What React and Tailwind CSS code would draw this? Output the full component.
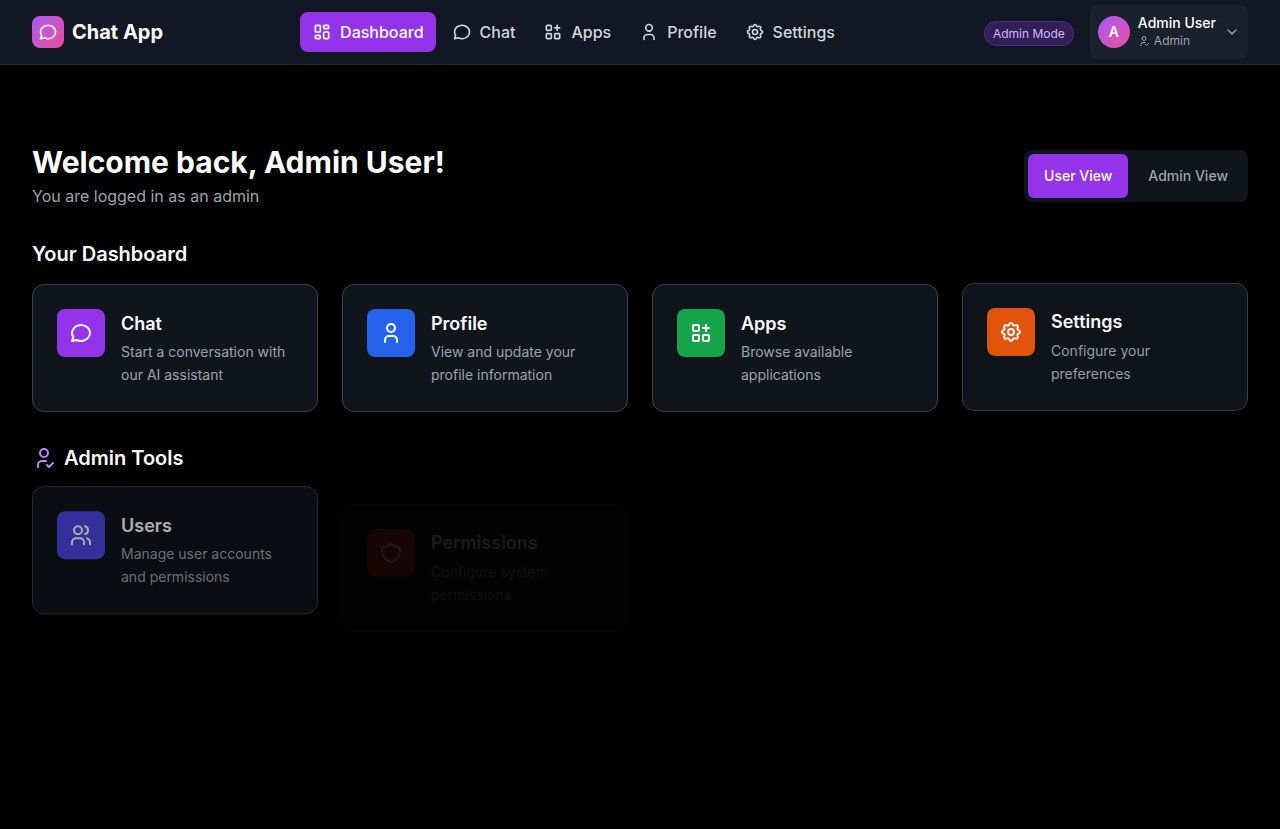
import {
  TbApps,
  TbChevronDown,
  TbLayoutDashboard,
  TbMessageCircle,
  TbSettings,
  TbShield,
  TbUser,
  TbUserCheck,
  TbUsers,
} from "react-icons/tb";

const navItems = [
  { label: "Dashboard", Icon: TbLayoutDashboard, active: true },
  { label: "Chat", Icon: TbMessageCircle },
  { label: "Apps", Icon: TbApps },
  { label: "Profile", Icon: TbUser },
  { label: "Settings", Icon: TbSettings },
];

const userCards = [
  { title: "Chat", text: "Start a conversation with our AI assistant", Icon: TbMessageCircle, color: "bg-[#9333ea]" },
  { title: "Profile", text: "View and update your profile information", Icon: TbUser, color: "bg-[#2563eb]" },
  { title: "Apps", text: "Browse available applications", Icon: TbApps, color: "bg-[#16a34a]" },
  { title: "Settings", text: "Configure your preferences", Icon: TbSettings, color: "bg-[#ea580c]", motion: "-translate-y-[1.1px] opacity-[0.96]", spacing: "mb-1" },
];

const adminCards = [
  { title: "Users", text: "Manage user accounts and permissions", Icon: TbUsers, color: "bg-[#4f46e5]", motion: "-translate-y-[0.8px] opacity-[0.68]" },
  { title: "Permissions", text: "Configure system permissions", Icon: TbShield, color: "bg-[#dc2626]", motion: "translate-y-[17px] opacity-[0.1]", spacing: "mb-1" },
];

function Card({ title, text, Icon, color, motion = "", spacing = "mt-[0.5px] mb-[3.5px]" }) {
  return (
    <div className={`flex items-start gap-4 rounded-xl border border-[#374151] bg-[#10151c] p-6 ${motion}`}>
      <div className={`flex size-12 shrink-0 items-center justify-center rounded-lg text-white ${color}`}>
        <Icon size={24} />
      </div>
      <div className="min-w-0">
        <h3 className={`text-lg leading-7 font-semibold text-white ${spacing}`}>{title}</h3>
        <p className="text-sm leading-[22.75px] text-[#9ca3af]">{text}</p>
      </div>
    </div>
  );
}

export default function App() {
  return (
    <div className="min-h-screen bg-black font-['Inter',sans-serif] text-white antialiased">
      <header className="flex h-[65px] items-center justify-between border-b border-[#1f2937] bg-[#111824] px-8">
        <div className="flex items-center gap-2">
          <div className="flex size-8 items-center justify-center rounded-lg bg-linear-to-br from-[#a855f7] to-[#ec4899]">
            <TbMessageCircle size={20} />
          </div>
          <span className="text-xl font-bold">Chat App</span>
        </div>

        <nav className="flex gap-1">
          {navItems.map(({ label, Icon, active }) => (
            <a
              key={label}
              className={`flex h-10 items-center gap-2 rounded-lg px-3 text-base font-medium ${
                active ? "bg-[#9333ea] text-white" : "text-[#d1d5db]"
              }`}
            >
              <Icon size={20} />
              <span>{label}</span>
            </a>
          ))}
        </nav>

        <div className="flex items-center gap-4">
          <span className="mt-[3px] rounded-full border border-[#9333ea]/40 bg-[#9333ea]/25 px-2 pt-[3px] pb-[2px] text-xs leading-[18px] text-[#d8b4fe]">
            Admin Mode
          </span>
          <button className="flex h-[54px] items-center gap-2 rounded-lg bg-[#1a212d] p-2">
            <span className="flex size-8 items-center justify-center rounded-full bg-linear-to-br from-[#a855f7] to-[#ec4899] text-sm font-semibold">
              A
            </span>
            <span className="flex flex-col items-start pb-[2px]">
              <span className="text-sm leading-5 font-medium">Admin User</span>
              <span className="flex items-center gap-1 text-xs leading-4 text-[#9ca3af]">
                <TbUserCheck size={12} />
                Admin
              </span>
            </span>
            <TbChevronDown size={16} className="text-[#9ca3af]" />
          </button>
        </div>
      </header>

      <main className="px-8 pt-[79px]">
        <div className="mb-8 flex items-center justify-between">
          <div>
            <h1 className="mb-1 text-3xl leading-9 font-bold">Welcome back, Admin User!</h1>
            <p className="text-base leading-6 text-[#9ca3af]">You are logged in as an admin</p>
          </div>
          <div className="flex rounded-lg bg-[#10151c] p-1 text-sm font-medium">
            <button className="h-11 rounded-md bg-[#9333ea] px-4 text-white">User View</button>
            <button className="ml-1 h-11 rounded-md px-4 text-[#9ca3af]">Admin View</button>
          </div>
        </div>

        <section className="mb-8">
          <h2 className="mb-4 text-xl leading-7 font-semibold">Your Dashboard</h2>
          <div className="grid h-[127.4px] grid-cols-4 gap-6">
            {userCards.map((card) => (
              <Card key={card.title} {...card} />
            ))}
          </div>
        </section>

        <section className="pt-[0.2px]">
          <h2 className="mb-[15.6px] flex items-center gap-2 text-xl leading-7 font-semibold">
            <TbUserCheck size={24} className="text-[#c084fc]" />
            Admin Tools
          </h2>
          <div className="grid grid-cols-4 gap-6">
            {adminCards.map((card) => (
              <Card key={card.title} {...card} />
            ))}
          </div>
        </section>
      </main>
    </div>
  );
}
